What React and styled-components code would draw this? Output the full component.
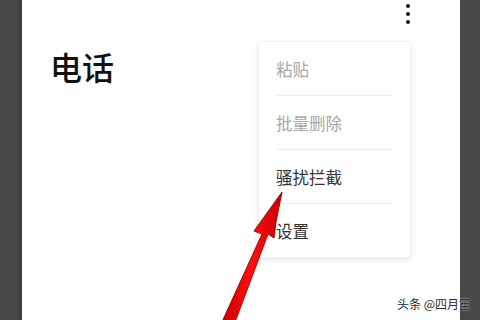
import React from 'react';
import styled, { createGlobalStyle } from 'styled-components';

const GlobalStyle = createGlobalStyle`
  html, body {
    margin: 0;
    padding: 0;
    width: 480px;
    height: 320px;
    overflow: hidden;
    background: #ffffff;
    font-family: "Noto Sans CJK SC", "Noto Sans", sans-serif;
  }
`;

const items = [
  { label: '粘贴', disabled: true },
  { label: '批量删除', disabled: true },
  { label: '骚扰拦截', disabled: false },
  { label: '设置', disabled: false },
];

const App = () => {
  return (
    <>
      <GlobalStyle />
      <Frame>
        <LeftBar />
        <Screen>
          <TopBar>
            <MoreButton>
              <Dot />
              <Dot />
              <Dot />
            </MoreButton>
          </TopBar>
          <Title>电话</Title>
          <Menu>
            {items.map((item, i) => (
              <MenuItem key={item.label} last={i === items.length - 1}>
                <ItemLabel disabled={item.disabled}>{item.label}</ItemLabel>
              </MenuItem>
            ))}
          </Menu>
        </Screen>
        <RightBar />
        <Arrow viewBox="0 0 480 320" width="480" height="320">
          <defs>
            <linearGradient id="arrowFill" x1="0" y1="0" x2="1" y2="0">
              <stop offset="0" stopColor="#c80000" />
              <stop offset="0.5" stopColor="#ff1010" />
              <stop offset="1" stopColor="#c40000" />
            </linearGradient>
          </defs>
          <polygon
            points="282,192 276,222 274,238 268,234 235,322 222,322 262,234 254,231"
            fill="url(#arrowFill)"
            stroke="#b00000"
            strokeWidth="1"
            strokeLinejoin="round"
          />
        </Arrow>
        <Watermark>头条 @四月笙</Watermark>
      </Frame>
    </>
  );
};

export default App;

const Frame = styled.div`
  position: relative;
  display: flex;
  width: 480px;
  height: 320px;
  overflow: hidden;
`;

const LeftBar = styled.div`
  width: 22px;
  flex-shrink: 0;
  background: #474747;
  border-right: 4px solid #3e3e3e;
  box-sizing: border-box;
`;

const RightBar = styled.div`
  width: 20px;
  flex-shrink: 0;
  background: #474747;
`;

const Screen = styled.div`
  position: relative;
  flex: 1;
  background: #ffffff;
  display: flex;
  flex-direction: column;
`;

const TopBar = styled.div`
  height: 28px;
  display: flex;
  justify-content: flex-end;
  padding-right: 50px;
`;

const MoreButton = styled.div`
  display: flex;
  flex-direction: column;
  align-items: center;
  gap: 4px;
  padding-top: 4px;
`;

const Dot = styled.span`
  width: 4px;
  height: 4px;
  border-radius: 50%;
  background: #111;
`;

const Title = styled.h1`
  margin: 20px 0 0 28px;
  font-size: 32px;
  line-height: 36px;
  font-weight: 500;
  color: #111;
`;

const Menu = styled.ul`
  position: absolute;
  left: 236px;
  top: 41px;
  width: 153px;
  margin: 0;
  padding: 0;
  list-style: none;
  background: #fff;
  border: 1px solid #f2f2f2;
  border-radius: 3px;
  box-shadow: 0 2px 6px rgba(0, 0, 0, 0.1);
  box-sizing: border-box;
`;

const MenuItem = styled.li`
  height: 53px;
  margin: 0 17px;
  display: flex;
  align-items: center;
  border-bottom: ${p => (p.last ? 'none' : '1px solid #ececec')};
`;

const ItemLabel = styled.span`
  font-size: 16.5px;
  color: ${p => (p.disabled ? '#a8a8a8' : '#333')};
`;

const Arrow = styled.svg`
  position: absolute;
  left: 0;
  top: 0;
  pointer-events: none;
`;

const Watermark = styled.div`
  position: absolute;
  left: 397px;
  top: 296px;
  font-size: 12px;
  line-height: 16px;
  color: #2a2a2a;
  white-space: nowrap;
  text-shadow: 0 0 2px rgba(255, 255, 255, 0.9);
`;
